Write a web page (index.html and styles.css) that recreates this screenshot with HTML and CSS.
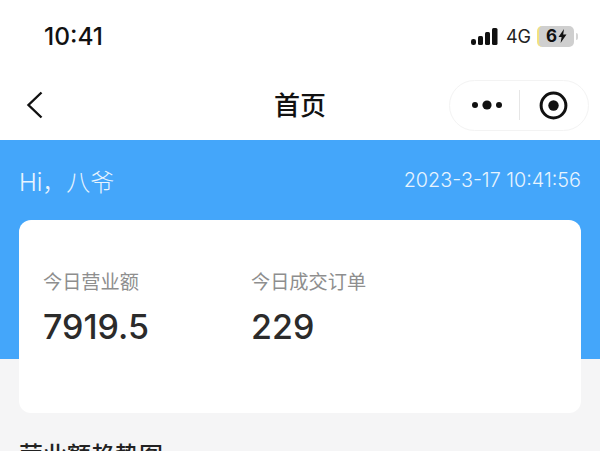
FILE: index.html
```html
<!DOCTYPE html>
<html lang="zh">
<head>
    <meta charset="UTF-8">
    <title>首页</title>
    <link rel="stylesheet" href="styles.css">
</head>
<body>
    <!-- Status Bar -->
    <div class="status-bar">
        <span class="clock">10:41</span>
        <div class="status-icons">
            <svg class="signal" width="27" height="17" viewBox="0 0 27 17">
                <rect x="0" y="11" width="5" height="6" rx="2.2" fill="#111"/>
                <rect x="7" y="8" width="5" height="9" rx="1.5" fill="#111"/>
                <rect x="14" y="4" width="5" height="13" rx="1.5" fill="#111"/>
                <rect x="21" y="0" width="5.5" height="17" rx="1.5" fill="#111"/>
            </svg>
            <span class="network">4G</span>
            <div class="battery">
                <span class="battery-text">6</span>
                <svg width="9" height="14" viewBox="0 0 9 14">
                    <path d="M6 0 L0.5 8 H3.6 L2.6 14 L8.5 5.6 H5.2 Z" fill="#111"/>
                </svg>
            </div>
            <span class="battery-cap"></span>
        </div>
    </div>

    <!-- Nav Bar -->
    <div class="nav-bar">
        <svg class="back" width="18" height="28" viewBox="0 0 18 28">
            <path d="M15.5 1.5 L2.5 14 L15.5 26.5" fill="none" stroke="#111" stroke-width="2.4"/>
        </svg>
        <h1 class="nav-title">首页</h1>
        <div class="capsule">
            <svg class="capsule-more" width="32" height="12" viewBox="0 0 32 12">
                <circle cx="4" cy="6" r="3" fill="#111"/>
                <circle cx="16" cy="6" r="4.6" fill="#111"/>
                <circle cx="28" cy="6" r="3" fill="#111"/>
            </svg>
            <span class="capsule-line"></span>
            <svg class="capsule-close" width="29" height="29" viewBox="0 0 29 29">
                <circle cx="14.5" cy="14.5" r="12.4" fill="none" stroke="#111" stroke-width="3"/>
                <circle cx="14.5" cy="14.5" r="5.2" fill="#111"/>
            </svg>
        </div>
    </div>

    <!-- Main Content -->
    <div class="main">
        <div class="hero">
            <div class="hero-row">
                <span class="greeting">Hi，八爷</span>
                <span class="datetime">2023-3-17 10:41:56</span>
            </div>
        </div>
        <div class="card">
            <div class="stat stat-sales">
                <p class="stat-label">今日营业额</p>
                <p class="stat-value">7919.5</p>
            </div>
            <div class="stat">
                <p class="stat-label">今日成交订单</p>
                <p class="stat-value">229</p>
            </div>
        </div>
        <h2 class="section-title">营业额趋势图</h2>
    </div>
</body>
</html>
```

FILE: styles.css
```css
/* General Reset */
* {
    margin: 0;
    padding: 0;
    box-sizing: border-box;
    font-family: Inter, "Noto Sans CJK SC", sans-serif;
}

html, body {
    width: 100%;
    height: 100%;
    overflow: hidden;
}

body {
    background-color: #F5F5F6;
}

/* Status Bar */
.status-bar {
    height: 70px;
    background-color: #FFFFFF;
    display: flex;
    justify-content: space-between;
    align-items: center;
    padding: 2px 22px 0 44px;
}

.clock {
    font-size: 24.5px;
    font-weight: 500;
    color: #111111;
}

.status-icons {
    display: flex;
    align-items: center;
}

.network {
    margin-left: 8px;
    font-size: 18px;
    color: #222222;
}

.battery {
    width: 37px;
    height: 21px;
    margin-left: 6px;
    display: flex;
    justify-content: center;
    align-items: center;
    gap: 1px;
    background-color: #CFCFCF;
    border-left: 2px solid #F3E27E;
    border-radius: 5px;
}

.battery-text {
    font-size: 17px;
    font-weight: 700;
    color: #111111;
}

.battery-cap {
    width: 2px;
    height: 7px;
    margin-left: 2px;
    background-color: #D5D5D5;
    border-radius: 0 2px 2px 0;
}

/* Nav Bar */
.nav-bar {
    height: 70px;
    background-color: #FFFFFF;
    display: flex;
    align-items: center;
    justify-content: space-between;
    padding: 0 11px 0 26px;
    position: relative;
}

.nav-title {
    position: absolute;
    left: 0;
    right: 0;
    top: 17px;
    line-height: 38px;
    text-align: center;
    font-size: 26px;
    font-weight: 500;
    color: #111111;
    pointer-events: none;
}

.capsule {
    width: 140px;
    height: 51px;
    display: flex;
    align-items: center;
    justify-content: space-between;
    padding: 0 20px 0 21px;
    background-color: #FFFFFF;
    border: 1px solid #F3F3F3;
    border-radius: 26px;
}

.capsule-line {
    width: 1px;
    height: 30px;
    background-color: #E6E6E6;
    margin-right: 3px;
}

/* Main Content */
.main {
    padding: 0 19px;
    position: relative;
}

.hero {
    height: 219px;
    margin: 0 -19px -139px;
    padding: 0 19px;
    background-color: #44A6FA;
}

.hero-row {
    height: 80px;
    display: flex;
    justify-content: space-between;
    align-items: center;
    color: #E8F4FE;
}

.greeting {
    font-size: 24px;
    font-weight: 300;
}

.datetime {
    font-size: 19.8px;
    font-weight: 300;
}

.card {
    height: 193px;
    position: relative;
    display: flex;
    padding: 49px 24px 0;
    background-color: #FFFFFF;
    border-radius: 12px;
}

.stat-sales {
    width: 208px;
}

.stat-label {
    font-size: 19.2px;
    line-height: 26px;
    color: #8E8E8E;
}

.stat-value {
    margin-top: 11px;
    font-size: 34px;
    line-height: 42px;
    font-weight: 500;
    color: #2B2B2B;
}

.section-title {
    margin-top: 23px;
    font-size: 24px;
    font-weight: 500;
    color: #222222;
}
```
